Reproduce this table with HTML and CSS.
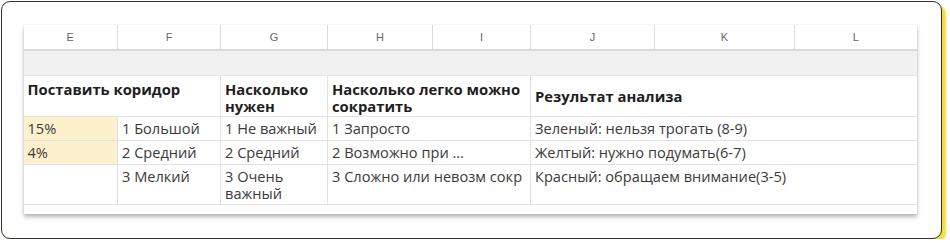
FILE: index.html
```html
<!DOCTYPE html>
<html lang="ru">
<head>
<meta charset="utf-8">
<link rel="stylesheet" href="styles.css">
</head>
<body>
<div class="card">
  <div class="sheet">
    <table class="grid">
      <colgroup>
        <col class="c-e"><col class="c-f"><col class="c-g"><col class="c-h"><col class="c-i"><col class="c-j"><col class="c-k"><col class="c-l">
      </colgroup>
      <tr class="letters">
        <th>E</th><th>F</th><th>G</th><th>H</th><th>I</th><th>J</th><th>K</th><th>L</th>
      </tr>
      <tr class="band"><td colspan="8"></td></tr>
      <tr class="head">
        <td colspan="2">Поставить коридор</td>
        <td>Насколько нужен</td>
        <td colspan="2">Насколько легко можно сократить</td>
        <td colspan="3" class="mid">Результат анализа</td>
      </tr>
      <tr class="r1">
        <td class="hl">15%</td>
        <td>1 Большой</td>
        <td>1 Не важный</td>
        <td colspan="2">1 Запросто</td>
        <td colspan="3">Зеленый: нельзя трогать (8-9)</td>
      </tr>
      <tr class="r2">
        <td class="hl">4%</td>
        <td>2 Средний</td>
        <td>2 Средний</td>
        <td colspan="2">2 Возможно при ...</td>
        <td colspan="3">Желтый: нужно подумать(6-7)</td>
      </tr>
      <tr class="r3">
        <td></td>
        <td>3 Мелкий</td>
        <td>3 Очень важный</td>
        <td colspan="2">3 Сложно или невозм сокр</td>
        <td colspan="3">Красный: обращаем внимание(3-5)</td>
      </tr>
      <tr class="tail"><td colspan="8"></td></tr>
    </table>
  </div>
</div>
</body>
</html>
```
FILE: styles.css
```css
html, body {
  margin: 0;
  padding: 0;
  background: #ffffff;
}
.card {
  box-sizing: border-box;
  margin: 1px 0 0 1px;
  width: 941px;
  height: 238px;
  border: 1.5px solid #333333;
  border-radius: 9px;
  background: #ffffff;
  box-shadow: 4px 4px 2px #f5dc3c;
  padding: 23px 0 0 21.5px;
}
.sheet {
  width: 893px;
  background: #ffffff;
  box-shadow: 0 3px 4px rgba(0, 0, 0, 0.28), 0 0 2px rgba(0, 0, 0, 0.08);
}
.grid {
  border-collapse: collapse;
  table-layout: fixed;
  width: 893px;
  font-family: "Open Sans", "Noto Sans", sans-serif;
  font-size: 14.6px;
  color: #3a3a3a;
}
.c-e { width: 94px; }
.c-f { width: 103px; }
.c-g { width: 107px; }
.c-h { width: 105px; }
.c-i { width: 98px; }
.c-j { width: 124px; }
.c-k { width: 140px; }
.c-l { width: 122px; }
.grid td, .grid th {
  border: 1px solid #e2e2e2;
  padding: 0 4px;
  vertical-align: top;
  text-align: left;
  line-height: 17px;
  overflow: hidden;
  white-space: nowrap;
}
.grid tr > :first-child { border-left: none; }
.grid tr > :last-child { border-right: none; }
.letters th {
  height: 24px;
  font-family: "Liberation Sans", Arial, sans-serif;
  font-weight: normal;
  font-size: 11px;
  color: #666666;
  text-align: center;
  vertical-align: middle;
  border-top: none;
  border-left: 1px solid #dcdcdc;
  border-right: 1px solid #dcdcdc;
  border-bottom: 2px solid #dadada;
}
.band td {
  height: 24px;
  background: #f1f1f1;
  border-bottom: 1px solid #e6e6e6;
}
.head td {
  height: 41px;
  font-weight: bold;
  font-size: 14.8px;
  color: #1e1e1e;
  white-space: normal;
  padding-top: 5px;
  padding-bottom: 0;
  box-sizing: border-box;
}
.head td.mid {
  vertical-align: middle;
  padding-top: 0;
}
.r1 td, .r2 td {
  height: 23px;
  vertical-align: middle;
  padding-top: 0;
}
.r3 td {
  height: 40px;
  white-space: normal;
  padding-top: 3px;
  box-sizing: border-box;
}
.hl {
  background: #fdf0cc;
}
.tail td {
  height: 9px;
  padding: 0;
  border-bottom: none;
}
```
